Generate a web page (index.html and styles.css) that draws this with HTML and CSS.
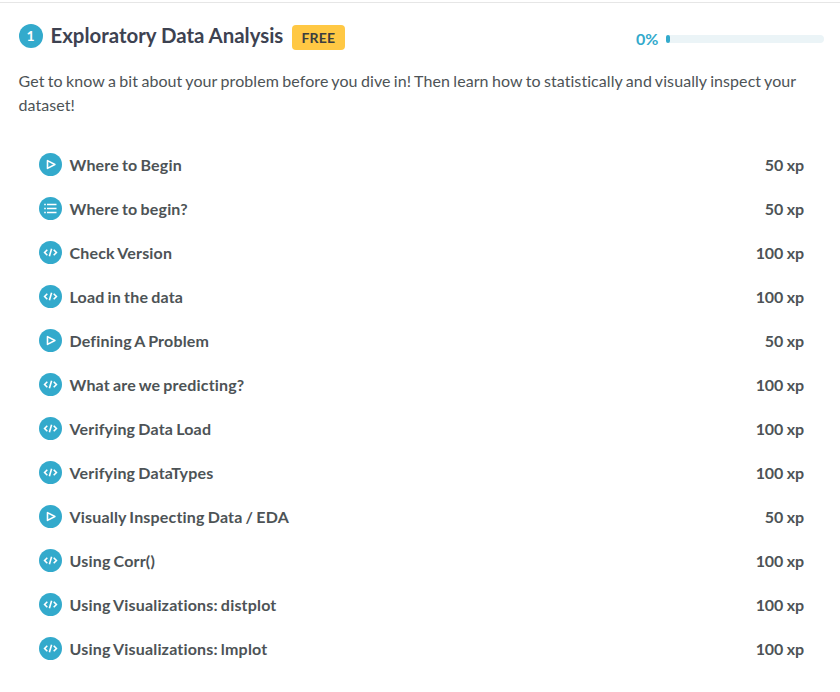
FILE: index.html
```html
<!DOCTYPE html>
<html lang="en">
<head>
<meta charset="utf-8">
<title>Exploratory Data Analysis</title>
<link rel="stylesheet" href="styles.css">
</head>
<body>
<svg width="0" height="0" class="defs">
<symbol id="video" viewBox="0 0 23 23"><circle cx="11.5" cy="11.5" r="11.5" fill="#33aacc"/><path d="M8.5 7.6v7.8l7.4-3.9z" fill="none" stroke="#fff" stroke-width="1.6" stroke-linejoin="round"/></symbol>
<symbol id="list" viewBox="0 0 23 23"><circle cx="11.5" cy="11.5" r="11.5" fill="#33aacc"/><path d="M5.2 7.5h1.6M8 7.5h9.5M5.2 11.5h1.6M8 11.5h9.5M5.2 15.5h1.6M8 15.5h9.5" stroke="#fff" stroke-width="1.5"/></symbol>
<symbol id="code" viewBox="0 0 23 23"><circle cx="11.5" cy="11.5" r="11.5" fill="#33aacc"/><path d="M8.3 8.8l-2.7 2.7 2.7 2.7M14.7 8.8l2.7 2.7-2.7 2.7M12.6 7.7l-2.2 7.6" fill="none" stroke="#fff" stroke-width="1.6"/></symbol>
</svg>
<section class="chapter">
<header class="head">
<span class="number">1</span>
<h1>Exploratory Data Analysis</h1>
<span class="badge">FREE</span>
<div class="progress"><span>0%</span><div class="track"><div class="fill"></div></div></div>
</header>
<p class="intro">Get to know a bit about your problem before you dive in! Then learn how to statistically and visually inspect your dataset!</p>
<ul class="lessons">
<li><svg><use href="#video"/></svg><span>Where to Begin</span><b>50 xp</b></li>
<li><svg><use href="#list"/></svg><span>Where to begin?</span><b>50 xp</b></li>
<li><svg><use href="#code"/></svg><span>Check Version</span><b>100 xp</b></li>
<li><svg><use href="#code"/></svg><span>Load in the data</span><b>100 xp</b></li>
<li><svg><use href="#video"/></svg><span>Defining A Problem</span><b>50 xp</b></li>
<li><svg><use href="#code"/></svg><span>What are we predicting?</span><b>100 xp</b></li>
<li><svg><use href="#code"/></svg><span>Verifying Data Load</span><b>100 xp</b></li>
<li><svg><use href="#code"/></svg><span>Verifying DataTypes</span><b>100 xp</b></li>
<li><svg><use href="#video"/></svg><span>Visually Inspecting Data / EDA</span><b>50 xp</b></li>
<li><svg><use href="#code"/></svg><span>Using Corr()</span><b>100 xp</b></li>
<li><svg><use href="#code"/></svg><span>Using Visualizations: distplot</span><b>100 xp</b></li>
<li><svg><use href="#code"/></svg><span>Using Visualizations: lmplot</span><b>100 xp</b></li>
</ul>
</section>
</body>
</html>
```
FILE: styles.css
```css
* { box-sizing: border-box; }
body { margin: 0; background: #fff; color: #4d5356; font: 16px/24px Lato, sans-serif; font-variant-ligatures: none; }
.defs { display: block; }
.chapter { border-top: 1px solid #e6e6e6; margin-top: 2px; padding: 19px 16px 0 18.5px; }
.head { display: flex; align-items: center; height: 28px; }
.number { width: 24px; height: 24px; border-radius: 50%; background: #3ac; color: #fff; font-size: 14px; font-weight: 700; text-align: center; }
h1 { margin: -2px 8.5px 0 8px; width: 233px; white-space: nowrap; color: #3d4251; font-size: 20.4px; line-height: 28px; font-weight: 700; }
.badge { height: 25px; margin-top: 3px; padding: 0 9.5px; border-radius: 4px; background: #ffc844; color: #3b3d3f; font-size: 14px; letter-spacing: 0.2px; line-height: 26px; font-weight: 700; }
.progress { display: flex; align-items: center; gap: 7.5px; margin: 6px 0 0 auto; color: #3ac; font-weight: 700; }
.track { width: 158px; height: 8px; border-radius: 4px; background: #ebf4f7; }
.fill { width: 4px; height: 8px; border-radius: 4px; background: #3ac; }
.intro { margin: 19px 0 0; letter-spacing: 0.08px; word-spacing: -0.85px; }
.lessons { list-style: none; margin: 25px 0 0; padding: 0 20px 0 20.5px; font-weight: 700; letter-spacing: 0.18px; word-spacing: -1px; }
.lessons li { display: flex; align-items: center; height: 44px; }
.lessons svg { width: 23px; height: 23px; margin: 0 7.5px 0 0; }
.lessons span, .lessons b { padding-top: 1px; }
.lessons b { margin-left: auto; font-weight: 700; letter-spacing: -0.1px; word-spacing: -0.2px; }
```
